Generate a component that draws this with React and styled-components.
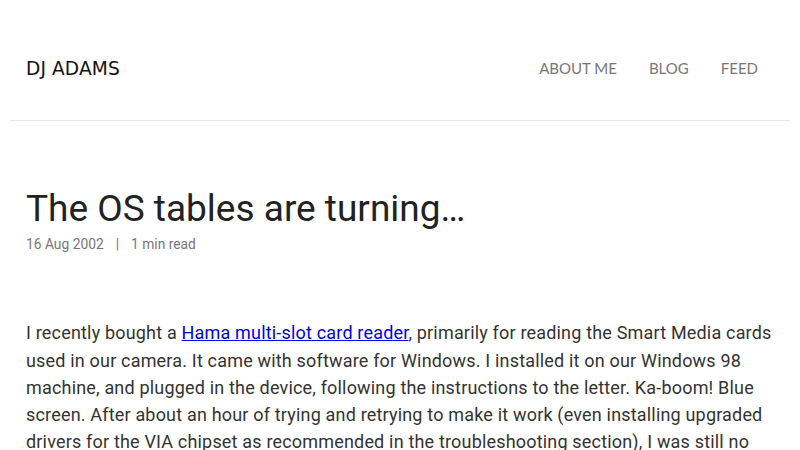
import React from "react";
import styled, { createGlobalStyle } from "styled-components";

const Global = createGlobalStyle`
  html, body { margin: 0; padding: 0; background: #fff; }
  body { font-family: Roboto, sans-serif; color: #333; }
`;

const Page = styled.div`
  padding: 0 10px;
`;

const Header = styled.header`
  display: flex;
  align-items: center;
  justify-content: space-between;
  height: 121px;
  padding: 16px 32px 0 16px;
  border-bottom: 1px solid #e6e6e6;
  box-sizing: border-box;
`;

const Brand = styled.a`
  font-family: "DejaVu Sans", sans-serif;
  font-size: 18.6px;
  color: #111;
  text-decoration: none;
  letter-spacing: 0.1px;
`;

const Nav = styled.nav`
  display: flex;
  gap: 32px;
`;

const NavLink = styled.a`
  font-family: "Lato", sans-serif;
  font-size: 15px;
  color: #777;
  text-decoration: none;
`;

const Article = styled.article`
  padding: 66px 16px 0;
`;

const Title = styled.h1`
  margin: 0;
  font-family: Roboto, sans-serif;
  font-weight: 400;
  font-size: 37px;
  line-height: 1.2;
  color: #222;
`;

const Meta = styled.div`
  margin-top: 5px;
  font-size: 13.8px;
  color: #777;
  display: flex;
  gap: 12px;
`;

const Body = styled.p`
  margin: 67px 0 0;
  font-size: 18px;
  line-height: 27.2px;
  letter-spacing: 0.18px;
  color: #333;
  a { color: #0000ee; }
`;

export default function App() {
  return (
    <Page>
      <Global />
      <Header>
        <Brand href="#">DJ ADAMS</Brand>
        <Nav>
          <NavLink href="#">ABOUT ME</NavLink>
          <NavLink href="#">BLOG</NavLink>
          <NavLink href="#">FEED</NavLink>
        </Nav>
      </Header>
      <Article>
        <Title>The OS tables are turning…</Title>
        <Meta>
          <span>16 Aug 2002</span>
          <span>|</span>
          <span>1 min read</span>
        </Meta>
        <Body>
          I recently bought a <a href="#">Hama multi-slot card reader</a>, primarily for reading the Smart Media cards used in our camera. It came with software for Windows. I installed it on our Windows 98 machine, and plugged in the device, following the instructions to the letter. Ka-boom! Blue screen. After about an hour of trying and retrying to make it work (even installing upgraded drivers for the VIA chipset as recommended in the troubleshooting section), I was still no nearer to getting it working.
        </Body>
      </Article>
    </Page>
  );
}
